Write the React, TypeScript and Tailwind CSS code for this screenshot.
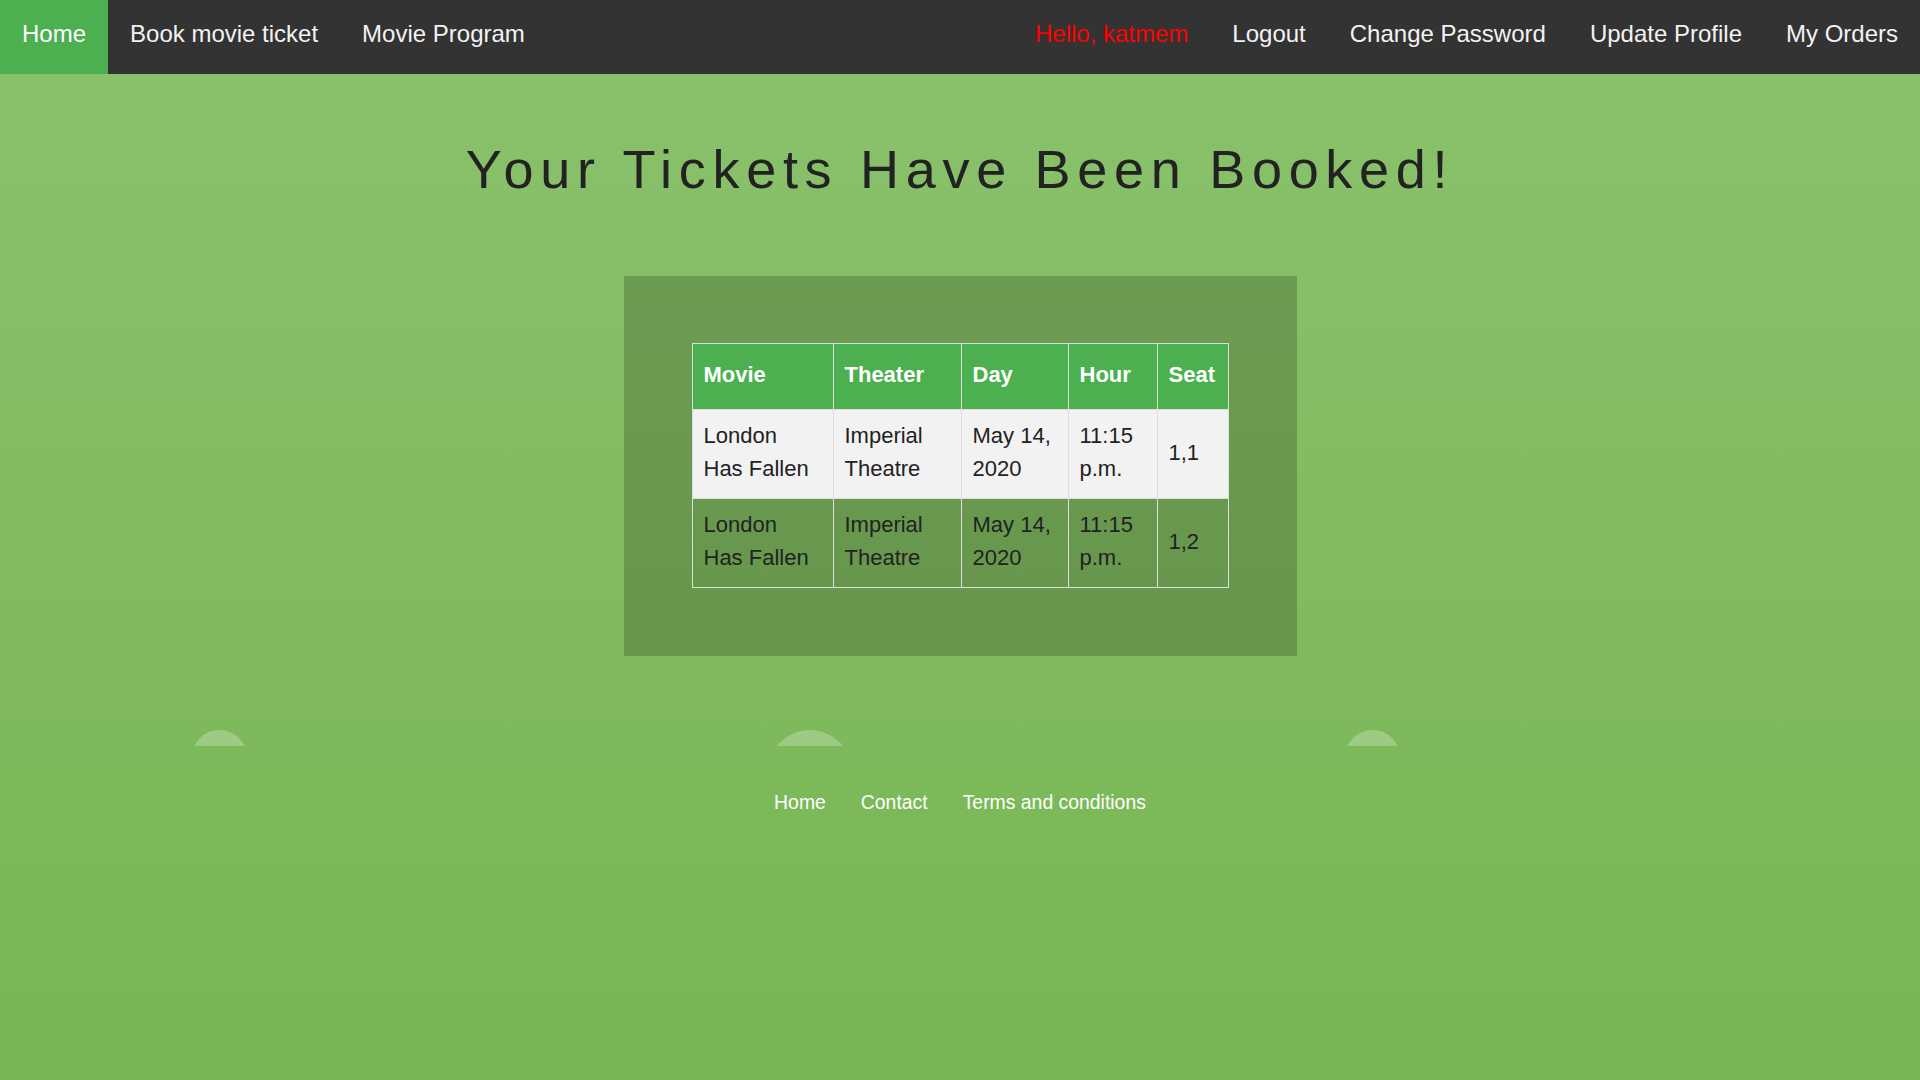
const leftLinks = ["Book movie ticket", "Movie Program"];
const rightLinks = ["Logout", "Change Password", "Update Profile", "My Orders"];

const tickets = [
  { movie: "London Has Fallen", theater: "Imperial Theatre", day: "May 14, 2020", hour: "11:15 p.m.", seat: "1,1" },
  { movie: "London Has Fallen", theater: "Imperial Theatre", day: "May 14, 2020", hour: "11:15 p.m.", seat: "1,2" },
];

const headers = [
  { label: "Movie", w: "w-[141px]" },
  { label: "Theater", w: "w-[128px]" },
  { label: "Day", w: "w-[107px]" },
  { label: "Hour", w: "w-[89px]" },
  { label: "Seat", w: "w-[71px]" },
];

export default function App() {
  return (
    <div className="min-h-screen bg-gradient-to-b from-[#8bc26d] to-[#77b652] font-['Liberation_Sans',Arial,sans-serif]">
      {/* Top nav */}
      <nav className="flex h-[74px] items-stretch justify-between bg-[#333] text-[24px] text-[#f2f2f2]">
        <div className="flex items-stretch">
          <a className="flex items-center bg-[#4caf50] px-[22px] pb-[6px] text-white">Home</a>
          {leftLinks.map((l) => (
            <a key={l} className="flex items-center px-[22px] pb-[6px]">
              {l}
            </a>
          ))}
        </div>
        <div className="flex items-stretch">
          <span className="flex items-center px-[22px] pb-[6px] text-[#ff0000]">Hello, katmem</span>
          {rightLinks.map((l) => (
            <a key={l} className="flex items-center px-[22px] pb-[6px]">
              {l}
            </a>
          ))}
        </div>
      </nav>

      {/* Heading */}
      <h1 className="mt-[64px] text-center text-[54px] leading-[62px] tracking-[6.7px] text-[#222]">
        Your Tickets Have Been Booked!
      </h1>

      {/* Tickets box */}
      <div className="mx-auto mt-[76px] w-[673px] bg-black/[0.19] pt-[67px] pb-[68px]">
        <table className="mx-auto w-[536px] table-fixed border-collapse border border-[#ddd] text-[22px] leading-[33px]">
          <thead>
            <tr className="bg-[#4caf50] text-white">
              {headers.map((h) => (
                <th key={h.label} className={`${h.w} border border-[#ddd] px-[11px] pt-[14px] pb-[18px] text-left font-bold`}>
                  {h.label}
                </th>
              ))}
            </tr>
          </thead>
          <tbody className="text-[#222]">
            {tickets.map((t, i) => (
              <tr key={i} className={i % 2 === 0 ? "bg-[#f2f2f2]" : ""}>
                <td className="border border-[#ddd] px-[11px] pt-[9px] pb-[13px]">{t.movie}</td>
                <td className="border border-[#ddd] px-[11px] pt-[9px] pb-[13px]">{t.theater}</td>
                <td className="border border-[#ddd] px-[11px] pt-[9px] pb-[13px]">{t.day}</td>
                <td className="border border-[#ddd] px-[11px] pt-[9px] pb-[13px]">{t.hour}</td>
                <td className="border border-[#ddd] px-[11px] pt-[9px] pb-[13px]">{t.seat}</td>
              </tr>
            ))}
          </tbody>
        </table>
      </div>

      {/* Decorative bubbles */}
      <div className="relative h-[90px] overflow-hidden">
        <div className="absolute top-[74px] left-[192px] h-[55px] w-[55px] rounded-full bg-white/25" />
        <div className="absolute top-[74px] left-[768px] h-[84px] w-[84px] rounded-full bg-white/25" />
        <div className="absolute top-[74px] left-[1345px] h-[55px] w-[55px] rounded-full bg-white/25" />
      </div>

      {/* Footer */}
      <footer className="mt-[45px] flex justify-center gap-[35px] text-[19.4px] leading-[22px] text-white">
        <a>Home</a>
        <a>Contact</a>
        <a>Terms and conditions</a>
      </footer>
    </div>
  );
}
